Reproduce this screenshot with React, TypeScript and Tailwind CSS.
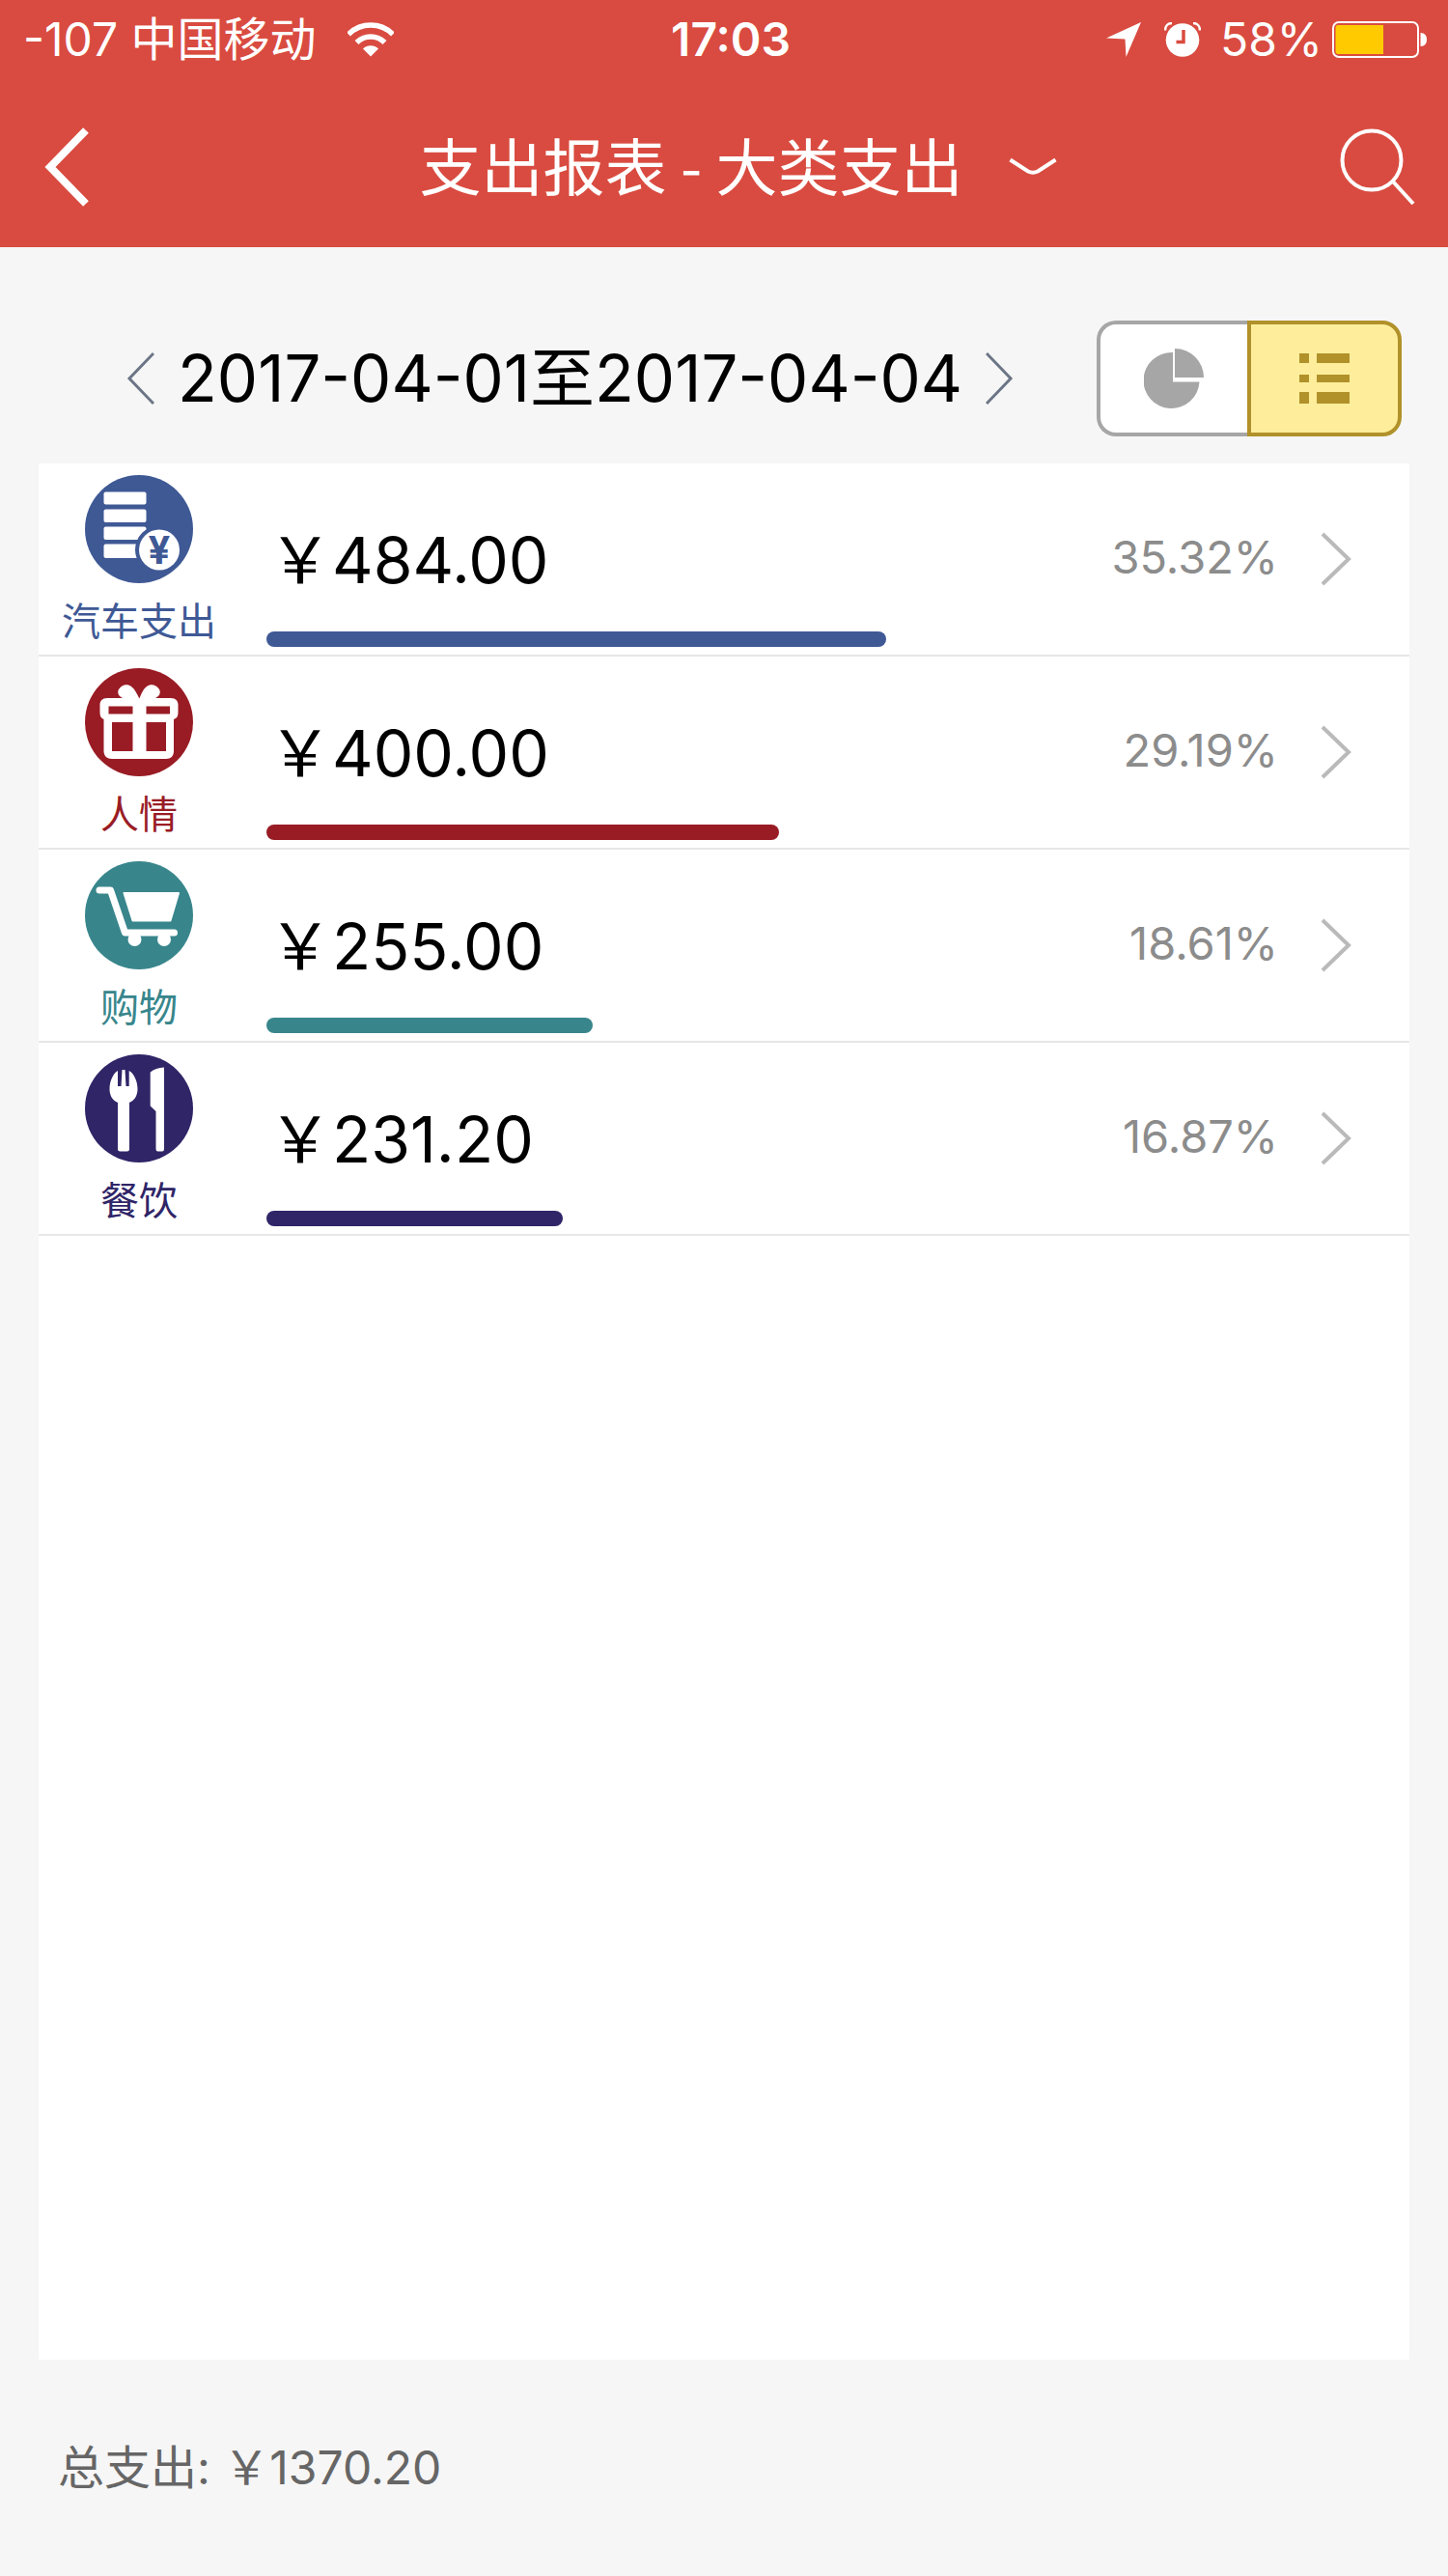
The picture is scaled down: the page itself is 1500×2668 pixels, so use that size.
import React, { useState } from "react";

interface Category {
  id: string;
  name: string;
  amount: number;
  textColor: string;
  barColor: string;
  icon: React.ReactNode;
}

// Stack of bills with a yuan coin
const CarIcon = () => (
  <svg viewBox="0 0 112 112" className="w-28 h-28" aria-hidden="true">
    <circle cx="56" cy="56" r="56" fill="#3f5995" />
    <rect x="19.5" y="17.5" width="44" height="13" rx="2" fill="#fff" />
    <rect x="19.5" y="35.5" width="44" height="13.5" rx="2" fill="#fff" />
    <rect x="19.5" y="53.5" width="44" height="13.5" rx="2" fill="#fff" />
    <rect x="19.5" y="71.5" width="44" height="14.5" rx="2" fill="#fff" />
    <circle cx="77" cy="77.5" r="25" fill="#3f5995" />
    <circle cx="77" cy="77.5" r="21" fill="#fff" />
    <text x="77" y="92" textAnchor="middle" fill="#3f5995" className="font-['Inter',sans-serif] text-[40px] font-bold">
      ¥
    </text>
  </svg>
);

const GiftIcon = () => (
  <svg viewBox="0 0 112 112" className="w-28 h-28" aria-hidden="true">
    <circle cx="56" cy="56" r="56" fill="#991c25" />
    <path
      fill="#fff"
      fillRule="evenodd"
      d="M23 31H39C35 29 33 26 35 22C38 17 44 16 48 19C52 22 54 27 56.3 31.5C58.5 27 60 22 64 19C68 16 74 17 77 22C79 26 77 29 73 31H89C94 31 96.500 34 96.500 38V46C96.500 50 95 52 92 53V86C92 91 89 94 84 94H28C23 94 19.500 91 19.500 86V53C17 52 15.500 50 15.500 46V38C15.500 34 18 31 23 31ZM24.500 39.500V47.500H49.500V39.500ZM63.500 39.500V47.500H88V39.500ZM28 56V86H49.500V56ZM63.500 56V86H84V56Z"
    />
  </svg>
);

const CartIcon = () => (
  <svg viewBox="0 0 112 112" className="w-28 h-28" aria-hidden="true">
    <circle cx="56" cy="56" r="56" fill="#38868c" />
    <path d="M15 30H26.500L41.500 74H92.500" fill="none" stroke="#fff" strokeWidth="7" strokeLinecap="round" strokeLinejoin="round" />
    <path d="M40.500 33H97L88.500 61.500H49.500Z" fill="#fff" stroke="#fff" strokeWidth="2" strokeLinejoin="round" />
    <circle cx="51.5" cy="81" r="7" fill="#fff" />
    <circle cx="82" cy="81" r="7" fill="#fff" />
  </svg>
);

const DiningIcon = () => (
  <svg viewBox="0 0 112 112" className="w-28 h-28" aria-hidden="true">
    <circle cx="56" cy="56" r="56" fill="#2f2567" />
    <path
      fill="#fff"
      d="M34 17V33H37.500L38.500 16H41.500L42.500 33H45.700V17C51 20 54.500 28 54.500 36C54.500 43 51 48 46 50V98Q46 100.500 43.500 100.500H36.500Q34 100.500 34 98V50C29 48 25.500 43 25.500 36C25.500 28 29 20 34 17Z"
    />
    <path fill="#fff" d="M67.700 18.500Q73 14 82 13.500V98Q82 100.500 80 100.500H75.500Q73.500 100.500 73.500 98V59L67.700 53.500Z" />
  </svg>
);

const categories: Category[] = [
  { id: "car", name: "汽车支出", amount: 484, textColor: "text-[#3f5995]", barColor: "bg-[#3f5995]", icon: <CarIcon /> },
  { id: "gift", name: "人情", amount: 400, textColor: "text-[#991c25]", barColor: "bg-[#991c25]", icon: <GiftIcon /> },
  { id: "shopping", name: "购物", amount: 255, textColor: "text-[#38868c]", barColor: "bg-[#38868c]", icon: <CartIcon /> },
  { id: "dining", name: "餐饮", amount: 231.2, textColor: "text-[#2f2567]", barColor: "bg-[#2f2567]", icon: <DiningIcon /> },
];

const total = categories.reduce((sum, c) => sum + c.amount, 0);
const largest = Math.max(...categories.map((c) => c.amount));

// Full-width yuan sign before the amount
const formatMoney = (value: number) => `\uffe5${value.toFixed(2)}`;

function StatusBar() {
  return (
    <div className="grid grid-cols-[1fr_auto_1fr] items-center h-[90px] pl-6 pr-[22px] pb-2 text-[48px] leading-[60px]">
      <div className="flex items-center">
        <span>-107 中国移动</span>
        <svg viewBox="0 0 48 36" className="w-12 h-9 ml-8" fill="none" stroke="#fff" strokeWidth="5.500" aria-hidden="true">
          <path d="M1 12.500A32.500 32.500 0 0 1 47 12.500" />
          <path d="M9.500 21A20.500 20.500 0 0 1 38.500 21" />
          <path d="M16 27.500A11.500 11.500 0 0 1 32 27.500L24 35.500Z" fill="#fff" stroke="none" />
        </svg>
      </div>
      <span className="pl-3 font-semibold">17:03</span>
      <div className="flex items-center justify-end">
        <svg viewBox="0 0 36 36" className="w-9 h-9" aria-hidden="true">
          <path d="M36 0L20.500 36L19.500 17.500L0 16.500Z" fill="#fff" />
        </svg>
        <svg viewBox="0 0 38 36" className="w-[38px] h-9 ml-6" aria-hidden="true">
          <circle cx="19" cy="18.500" r="17.300" fill="#fff" />
          <path d="M1 8.500C1 4 4 1 8 1M30 1C34 1 37 4 37 8.500" fill="none" stroke="#fff" strokeWidth="2.500" />
          <path d="M20 8V20.500H12.500" fill="none" stroke="#d94b40" strokeWidth="3.500" />
        </svg>
        <span className="ml-5">58%</span>
        <svg viewBox="0 0 98 38" className="w-[98px] h-[38px] ml-2.5" aria-hidden="true">
          <rect x="1" y="1" width="88" height="36" rx="6" fill="none" stroke="#fff" strokeWidth="2" />
          <path d="M6 4H53V34H6Q3.500 34 3.500 31V7Q3.500 4 6 4Z" fill="#ffca00" />
          <path d="M91.500 12C96 12 98 15 98 19C98 23 96 26 91.500 26Z" fill="#fff" />
        </svg>
      </div>
    </div>
  );
}

function NavBar() {
  return (
    <div className="grid grid-cols-[1fr_auto_1fr] items-center h-[166px] pl-9 pr-[34px]">
      <button type="button" aria-label="返回" className="justify-self-start pl-2">
        <svg viewBox="0 0 48 84" className="w-12 h-[84px]" fill="none" stroke="#fff" strokeWidth="8">
          <path d="M45 4L8 42L45 80" />
        </svg>
      </button>
      <button type="button" className="flex items-center gap-12 pl-7">
        <h1 className="pb-2 font-['Noto_Sans_CJK_SC',sans-serif] text-[64px] leading-[80px]">支出报表 - 大类支出</h1>
        <svg viewBox="0 0 50 20" className="w-[50px] h-5" fill="none" stroke="#fff" strokeWidth="4" aria-hidden="true">
          <path d="M1.500 2.500L20 14.500Q25 17 30 14.500L48.500 2.500" />
        </svg>
      </button>
      <button type="button" aria-label="搜索" className="justify-self-end">
        <svg viewBox="0 0 78 80" className="w-[78px] h-20" fill="none" stroke="#fff" strokeWidth="4">
          <circle cx="33" cy="33" r="30.500" />
          <path d="M55 55L76 78" />
        </svg>
      </button>
    </div>
  );
}

export default function App() {
  const [view, setView] = useState<"pie" | "list">("list");

  return (
    <div className="flex flex-col min-h-screen bg-[#f6f6f6] text-black font-['Inter','Noto_Sans_CJK_SC',sans-serif]">
      <header className="bg-[#d94b40] text-white">
        <StatusBar />
        <NavBar />
      </header>

      {/* Date range and view switch */}
      <div className="flex items-center justify-between pl-32 pr-12 pt-[76px] pb-7">
        <div className="flex items-center gap-6">
          <button type="button" aria-label="上一段">
            <svg viewBox="0 0 32 56" className="w-8 h-14" fill="none" stroke="#6b7586" strokeWidth="3">
              <path d="M31 2L6 28L31 54" />
            </svg>
          </button>
          <span className="text-[67px] leading-[80px] whitespace-nowrap">2017-04-01至2017-04-04</span>
          <button type="button" aria-label="下一段">
            <svg viewBox="0 0 32 56" className="w-8 h-14" fill="none" stroke="#6b7586" strokeWidth="3">
              <path d="M1 2L26 28L1 54" />
            </svg>
          </button>
        </div>

        <div className="flex h-[120px]">
          <button
            type="button"
            aria-label="饼图"
            aria-pressed={view === "pie"}
            onClick={() => setView("pie")}
            className="flex items-center justify-center w-[156px] rounded-l-[20px] border-4 border-r-0 border-[#a6a6a6] bg-white"
          >
            <svg viewBox="0 0 62 62" className="w-[62px] h-[62px]" fill="#a6a6a6">
              <path d="M30 4A29 29 0 1 0 57.500 34.500H30Z" />
              <path d="M32 0A30 30 0 0 1 62 30H32Z" />
            </svg>
          </button>
          <button
            type="button"
            aria-label="列表"
            aria-pressed={view === "list"}
            onClick={() => setView("list")}
            className="flex items-center justify-center w-40 rounded-r-[20px] border-4 border-[#b19129] bg-[#feee9c]"
          >
            <svg viewBox="0 0 52 52" className="w-[52px] h-[52px]" fill="#b19129">
              <path d="M0 0H10V10H0ZM18 0H52V10H18ZM0 22H10V30H0ZM18 22H52V30H18ZM0 40H10V52H0ZM18 40H52V52H18Z" />
            </svg>
          </button>
        </div>
      </div>

      {/* Category list */}
      <ul className="flex-1 mx-10 bg-white">
        {categories.map((category) => (
          <li key={category.id} className="border-b-2 border-[#e7e7e7]">
            <button type="button" className="flex w-full h-[198px] text-left">
              <div className={`flex flex-col items-center w-52 pt-3 ${category.textColor}`}>
                {category.icon}
                <span className="mt-5 text-[40px] leading-10 whitespace-nowrap">{category.name}</span>
              </div>
              <div className="flex flex-col flex-1 h-full ml-7 pt-[60px] pb-2">
                <span className="pl-0.5 text-[66px] leading-[80px] whitespace-nowrap">{formatMoney(category.amount)}</span>
                <div
                  className={`mt-auto h-4 rounded-full ${category.barColor}`}
                  style={{ width: `${(category.amount / largest) * 100}%` }}
                />
              </div>
              <div className="flex items-center justify-end gap-11 w-[542px] h-full pr-[60px]">
                <span className="pb-1 text-[47px] leading-[60px] text-[#8c8c8c]">
                  {((category.amount / total) * 100).toFixed(2)}%
                </span>
                <svg viewBox="0 0 32 56" className="w-8 h-14" fill="none" stroke="#bababa" strokeWidth="4" aria-hidden="true">
                  <path d="M2 2L29 28L2 54" />
                </svg>
              </div>
            </button>
          </li>
        ))}
      </ul>

      <footer className="flex items-center h-56 px-[60px] text-[48px] leading-[60px] text-[#666]">
        总支出: {formatMoney(total)}
      </footer>
    </div>
  );
}
